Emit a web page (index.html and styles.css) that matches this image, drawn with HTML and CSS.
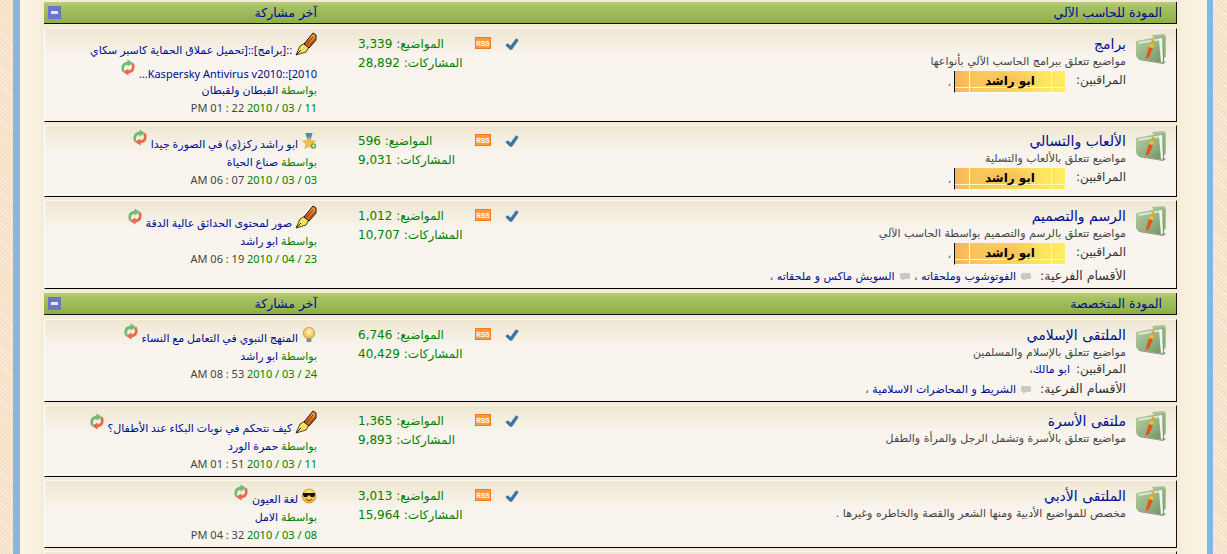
FILE: index.html
```html
<!DOCTYPE html>
<html lang="ar" dir="rtl">
<head>
    <meta charset="UTF-8">
    <title>المودة للحاسب الآلي</title>
    <link rel="stylesheet" href="styles.css">
</head>
<body>
    <svg class="sprites" width="0" height="0" aria-hidden="true">
        <defs>
            <linearGradient id="folderFill" x1="0" y1="0" x2="1" y2="1">
                <stop offset="0" stop-color="#b9d0a6"/>
                <stop offset="0.6" stop-color="#8cae7c"/>
                <stop offset="1" stop-color="#6b8f62"/>
            </linearGradient>
            <linearGradient id="penBody" x1="0" y1="1" x2="1" y2="0">
                <stop offset="0" stop-color="#c84a10"/>
                <stop offset="1" stop-color="#ffa030"/>
            </linearGradient>
            <radialGradient id="bulbFill" cx="0.5" cy="0.4" r="0.6">
                <stop offset="0" stop-color="#fff8c0"/>
                <stop offset="1" stop-color="#f0b030"/>
            </radialGradient>
            <radialGradient id="smileFill" cx="0.5" cy="0.35" r="0.7">
                <stop offset="0" stop-color="#fff090"/>
                <stop offset="1" stop-color="#eea020"/>
            </radialGradient>
            <symbol id="i-folder" viewBox="0 0 32 32">
                <path d="M17 3l12-1 2 2v21l-2 1z" fill="#a9c298"/>
                <path d="M1 9l27-5 2 2-1 23-2 2L3 27 1 24z" fill="url(#folderFill)"/>
                <path d="M3 10l24-4v2L4 12z" fill="#dbe8cf"/>
                <path d="M24 7l3-1 1 23-2 2z" fill="#f3f7ee"/>
                <path d="M4 27l23 4 2-2 2 1-3 2-24-4z" fill="#8a8f88"/>
                <path d="M11 25l3-10 4 1-4 9-3 2z" fill="#e8501c"/>
                <path d="M14 15l1-3 4 1-1 3z" fill="#f2c020"/>
                <circle cx="18" cy="9" r="1.600" fill="#f2a020"/>
            </symbol>
            <symbol id="i-check" viewBox="0 0 14 12">
                <path d="M0 7l3-2 2.500 2.500L11 0l3 2-7 10H5z" fill="#3f729f" stroke="#e4ecf2" stroke-width="0.5"/>
            </symbol>
            <symbol id="i-rss" viewBox="0 0 16 12">
                <rect x="0.5" y="0.5" width="15" height="11" fill="#fb9a3c" stroke="#f47a1c"/>
                <text x="8" y="8.6" font-family="Liberation Sans, sans-serif" font-size="6.5" font-weight="bold" text-anchor="middle" fill="#fff">RSS</text>
            </symbol>
            <symbol id="i-pen" viewBox="0 0 22 24">
                <path d="M1 23l4-9 5-3 4 4-3 5z" fill="#f5e060" stroke="#33330f" stroke-width="0.9"/>
                <path d="M1 23l5-5" stroke="#222" stroke-width="1"/>
                <path d="M9 12L18 1l3 2v5l-7 8z" fill="url(#penBody)" stroke="#111" stroke-width="1"/>
                <path d="M12 12l6-7M15 13l5-6" stroke="#5a2408" stroke-width="0.8"/>
            </symbol>
            <symbol id="i-arrows" viewBox="0 0 16 17">
                <path d="M3.500 12.500C1.500 8.500 3 4.500 8 4" fill="none" stroke="#6cbc74" stroke-width="2.800"/>
                <path d="M7.500 .5l5.500 3.500-5.500 3.500z" fill="#6cbc74"/>
                <path d="M12.500 4.500C14.500 8.500 13 12.500 8 13" fill="none" stroke="#e8694c" stroke-width="2.800"/>
                <path d="M8.500 9.500L3 13l5.500 3.500z" fill="#e8694c"/>
            </symbol>
            <symbol id="i-medal" viewBox="0 0 16 18">
                <path d="M4 0h8l-2 7H6z" fill="#4f86c6"/>
                <path d="M8 4l2.200 4.500 5 .6-3.600 3.400 1 5L8 15l-4.600 2.500 1-5L.8 9.100l5-.6z" fill="#f2c040" stroke="#d89a20" stroke-width="0.5"/>
                <circle cx="13" cy="14.500" r="3" fill="#62a848"/>
                <path d="M11.500 14.500h3M13 13v3" stroke="#fff" stroke-width="1"/>
            </symbol>
            <symbol id="i-bulb" viewBox="0 0 16 17">
                <circle cx="8" cy="6.500" r="6" fill="url(#bulbFill)" stroke="#a89060" stroke-width="0.8"/>
                <rect x="5.500" y="12" width="5" height="4" fill="#8c8c84"/>
            </symbol>
            <symbol id="i-smile" viewBox="0 0 16 16">
                <circle cx="8" cy="8" r="7" fill="url(#smileFill)" stroke="#c89030" stroke-width="0.7"/>
                <path d="M2 5h12v2l-1 2H10L8 7 6 9H3L2 7z" fill="#111"/>
                <path d="M5 11c2 2 4 2 6 0" stroke="#804010" fill="none"/>
            </symbol>
            <symbol id="i-bubble" viewBox="0 0 12 10">
                <path d="M2 1h8l1 1v4l-1 1H6L3 9V7H2L1 6V2z" fill="#c8c8c8"/>
            </symbol>
        </defs>
    </svg>

    <div class="page">
        <div class="section">
            <div class="cat-head">
                <a class="cat-title" href="#">المودة للحاسب الآلي</a>
                <span class="cat-last">آخر مشاركة</span>
                <span class="collapse"></span>
            </div>

            <div class="row row-a">
                <div class="forum">
                    <svg class="folder"><use href="#i-folder"/></svg>
                    <div class="info">
                        <a class="title" href="#">برامج</a>
                        <p class="desc">مواضيع تتعلق ببرامج الحاسب الآلي بأنواعها</p>
                        <p class="mods"><span class="label">المراقبين:</span><span class="banner">ابو راشد</span><span class="comma">،</span></p>
                    </div>
                </div>
                <svg class="check"><use href="#i-check"/></svg>
                <svg class="rss"><use href="#i-rss"/></svg>
                <div class="stats">
                    <div>المواضيع: 3,339</div>
                    <div>المشاركات: 28,892</div>
                </div>
                <div class="last">
                    <div class="post post-tall"><svg class="ico ico-pen"><use href="#i-pen"/></svg> <a href="#">::[برامج]::[تحميل عملاق الحماية كاسبر سكاي<br>2010]::Kaspersky Antivirus v2010...</a> <svg class="arrows"><use href="#i-arrows"/></svg></div>
                    <div class="by">بواسطة <a href="#">القبطان ولقبطان</a></div>
                    <div class="date" dir="ltr"><span class="time">PM 01 : 22</span> 2010 / 03 / 11</div>
                </div>
            </div>

            <div class="row row-b">
                <div class="forum">
                    <svg class="folder"><use href="#i-folder"/></svg>
                    <div class="info">
                        <a class="title" href="#">الألعاب والتسالي</a>
                        <p class="desc">مواضيع تتعلق بالألعاب والتسلية</p>
                        <p class="mods"><span class="label">المراقبين:</span><span class="banner">ابو راشد</span><span class="comma">،</span></p>
                    </div>
                </div>
                <svg class="check"><use href="#i-check"/></svg>
                <svg class="rss"><use href="#i-rss"/></svg>
                <div class="stats">
                    <div>المواضيع: 596</div>
                    <div>المشاركات: 9,031</div>
                </div>
                <div class="last">
                    <div class="post"><svg class="ico"><use href="#i-medal"/></svg> <a href="#">ابو راشد ركز(ي) في الصورة جيدا</a> <svg class="arrows"><use href="#i-arrows"/></svg></div>
                    <div class="by">بواسطة <a href="#">صناع الحياة</a></div>
                    <div class="date" dir="ltr"><span class="time">AM 06 : 07</span> 2010 / 03 / 03</div>
                </div>
            </div>

            <div class="row row-c">
                <div class="forum">
                    <svg class="folder"><use href="#i-folder"/></svg>
                    <div class="info">
                        <a class="title" href="#">الرسم والتصميم</a>
                        <p class="desc">مواضيع تتعلق بالرسم والتصميم بواسطة الحاسب الآلي</p>
                        <p class="mods"><span class="label">المراقبين:</span><span class="banner">ابو راشد</span><span class="comma">،</span></p>
                        <p class="subs"><span class="label">الأقسام الفرعية:</span><svg class="bubble"><use href="#i-bubble"/></svg><a href="#">الفوتوشوب وملحقاته</a> ، <svg class="bubble"><use href="#i-bubble"/></svg><a href="#">السويش ماكس و ملحقاته</a> ،</p>
                    </div>
                </div>
                <svg class="check"><use href="#i-check"/></svg>
                <svg class="rss"><use href="#i-rss"/></svg>
                <div class="stats">
                    <div>المواضيع: 1,012</div>
                    <div>المشاركات: 10,707</div>
                </div>
                <div class="last">
                    <div class="post"><svg class="ico ico-pen"><use href="#i-pen"/></svg> <a href="#">صور لمحتوى الحدائق عالية الدقة</a> <svg class="arrows"><use href="#i-arrows"/></svg></div>
                    <div class="by">بواسطة <a href="#">ابو راشد</a></div>
                    <div class="date" dir="ltr"><span class="time">AM 06 : 19</span> 2010 / 04 / 23</div>
                </div>
            </div>
        </div>

        <div class="section">
            <div class="cat-head">
                <a class="cat-title" href="#">المودة المتخصصة</a>
                <span class="cat-last">آخر مشاركة</span>
                <span class="collapse"></span>
            </div>

            <div class="row row-d">
                <div class="forum">
                    <svg class="folder"><use href="#i-folder"/></svg>
                    <div class="info">
                        <a class="title" href="#">الملتقى الإسلامي</a>
                        <p class="desc">مواضيع تتعلق بالإسلام والمسلمين</p>
                        <p class="mods mods-plain"><span class="label">المراقبين:</span><a href="#">ابو مالك</a> ،</p>
                        <p class="subs"><span class="label">الأقسام الفرعية:</span><svg class="bubble"><use href="#i-bubble"/></svg><a href="#">الشريط و المحاضرات الاسلامية</a> ،</p>
                    </div>
                </div>
                <svg class="check"><use href="#i-check"/></svg>
                <svg class="rss"><use href="#i-rss"/></svg>
                <div class="stats">
                    <div>المواضيع: 6,746</div>
                    <div>المشاركات: 40,429</div>
                </div>
                <div class="last">
                    <div class="post"><svg class="ico"><use href="#i-bulb"/></svg> <a href="#">المنهج النبوي في التعامل مع النساء</a> <svg class="arrows"><use href="#i-arrows"/></svg></div>
                    <div class="by">بواسطة <a href="#">ابو راشد</a></div>
                    <div class="date" dir="ltr"><span class="time">AM 08 : 53</span> 2010 / 03 / 24</div>
                </div>
            </div>

            <div class="row row-b">
                <div class="forum">
                    <svg class="folder"><use href="#i-folder"/></svg>
                    <div class="info">
                        <a class="title" href="#">ملتقى الأسرة</a>
                        <p class="desc">مواضيع تتعلق بالأسرة وتشمل الرجل والمرأة والطفل</p>
                    </div>
                </div>
                <svg class="check"><use href="#i-check"/></svg>
                <svg class="rss"><use href="#i-rss"/></svg>
                <div class="stats">
                    <div>المواضيع: 1,365</div>
                    <div>المشاركات: 9,893</div>
                </div>
                <div class="last">
                    <div class="post"><svg class="ico ico-pen"><use href="#i-pen"/></svg> <a href="#">كيف نتحكم في نوبات البكاء عند الأطفال؟</a> <svg class="arrows"><use href="#i-arrows"/></svg></div>
                    <div class="by">بواسطة <a href="#">حمرة الورد</a></div>
                    <div class="date" dir="ltr"><span class="time">AM 01 : 51</span> 2010 / 03 / 11</div>
                </div>
            </div>

            <div class="row row-e">
                <div class="forum">
                    <svg class="folder"><use href="#i-folder"/></svg>
                    <div class="info">
                        <a class="title" href="#">الملتقى الأدبي</a>
                        <p class="desc">مخصص للمواضيع الأدبية ومنها الشعر والقصة والخاطره وغيرها .</p>
                    </div>
                </div>
                <svg class="check"><use href="#i-check"/></svg>
                <svg class="rss"><use href="#i-rss"/></svg>
                <div class="stats">
                    <div>المواضيع: 3,013</div>
                    <div>المشاركات: 15,964</div>
                </div>
                <div class="last">
                    <div class="post"><svg class="ico"><use href="#i-smile"/></svg> <a href="#">لغة العيون</a> <svg class="arrows"><use href="#i-arrows"/></svg></div>
                    <div class="by">بواسطة <a href="#">الامل</a></div>
                    <div class="date" dir="ltr"><span class="time">PM 04 : 32</span> 2010 / 03 / 08</div>
                </div>
            </div>

            <div class="row row-stub"></div>
        </div>
    </div>
</body>
</html>
```

FILE: styles.css
```css
html, body {
    height: 554px;
    overflow: hidden;
}
body {
    margin: 0;
    font-family: "DejaVu Sans", sans-serif;
    font-size: 11px;
    color: #444;
    background-color: #f6e6cf;
    background-image: repeating-linear-gradient(45deg, #f9eeda 0 1px, #f3e0c6 1px 3px);
}
a {
    color: #000a96;
    text-decoration: none;
}
p {
    margin: 0;
}
.sprites {
    position: absolute;
}
.page {
    box-sizing: border-box;
    height: 554px;
    margin: 0 14px 0 13px;
    padding: 2px 30px 0 24px;
    border-left: 7px solid #85b6e6;
    border-right: 6px solid #85b6e6;
    background: linear-gradient(90deg, #fdf5e4 0, #f5ecd8 24px, #f5ecd8 calc(100% - 30px), #fdf5e4 100%);
}
.section {
    display: flex;
    flex-direction: column;
    gap: 3px;
    margin-bottom: 4px;
}
.section:last-child {
    margin-bottom: 0;
}
.cat-head {
    display: flex;
    align-items: center;
    box-sizing: border-box;
    height: 22px;
    margin-bottom: 1px;
    padding: 0 14px 0 4px;
    border-bottom: 1px solid #111;
    border-right: 1px solid #111;
    background: linear-gradient(#b9d07e 0, #b0ca70 2px, #a6c264 5px, #8fae45 100%);
}
.cat-title {
    flex: 1;
    font-size: 12.5px;
}
.cat-last {
    width: 256px;
    color: #000a96;
    font-size: 12.5px;
}
.collapse {
    position: relative;
    width: 13px;
    height: 13px;
    background: #6a74c8;
}
.collapse::after {
    content: "";
    position: absolute;
    left: 3px;
    right: 3px;
    top: 5px;
    height: 3px;
    background: #e8e8f8;
}
.row {
    display: flex;
    box-sizing: border-box;
    border-top: 1px solid #fbf8f0;
    border-left: 1px solid #fff;
    border-bottom: 1px solid #000;
    border-right: 1px solid #111;
    background: #f9f5ee linear-gradient(#efe7d2 0, #f9f5ee 28px) no-repeat;
}
.row-a { height: 94px; }
.row-b { height: 72px; }
.row-c { height: 89px; }
.row-d { height: 83px; }
.row-e { height: 68px; }
.row-stub {
    height: 3px;
    border-bottom: 0;
}

.forum {
    display: flex;
    width: 650px;
    flex-shrink: 0;
}
.folder {
    width: 32px;
    height: 32px;
    margin: 3px 9px 0 9px;
    flex-shrink: 0;
}
.info {
    padding-top: 6px;
}
.title {
    display: block;
    font-size: 14px;
    line-height: 18px;
}
.desc {
    line-height: 18px;
}
.label {
    margin-left: 11px;
    color: #333;
    font-size: 12px;
    line-height: 18px;
}
.mods {
    display: flex;
    height: 22px;
}
.mods-plain {
    height: 16px;
    line-height: 15px;
}
.mods-plain .label {
    margin-left: 6px;
    line-height: 15px;
}
.banner {
    box-sizing: border-box;
    width: 111px;
    height: 22px;
    border-left: 1px solid #111;
    border-bottom: 1px solid #fff;
    color: #000;
    font-size: 12px;
    font-weight: bold;
    line-height: 20px;
    text-align: center;
    background-image:
        linear-gradient(90deg, transparent 14px, #fff6c0 14px 15px, transparent 15px 96px, #fff6c0 96px 97px, transparent 97px),
        linear-gradient(transparent 16px, #fff6c0 16px 17px, transparent 17px),
        radial-gradient(ellipse 40px 14px at 45% 45%, #f6bc5c, transparent),
        linear-gradient(90deg, #f6b45c 0, #fdd25a 30%, #ffec60 100%);
}
.comma {
    margin: 6px 3px 0 0;
    font-size: 10px;
}
.subs {
    margin-top: 2px;
    line-height: 18px;
    font-size: 11px;
}
.subs .label {
    margin-left: 8px;
    font-size: 12.5px;
}
.bubble {
    width: 12px;
    height: 10px;
    margin: 0 0 0 4px;
    vertical-align: middle;
}
.check {
    width: 14px;
    height: 12px;
    margin: 9px 7px 0 7px;
    flex-shrink: 0;
}
.rss {
    width: 16px;
    height: 12px;
    margin: 8px 7px 0 7px;
    flex-shrink: 0;
}
.stats {
    width: 110px;
    flex-shrink: 0;
    padding-top: 6px;
    color: #008000;
    font-size: 12px;
    line-height: 19px;
    text-align: left;
}
.last {
    flex: 1;
    padding: 9px 41px 0 0;
    line-height: 18px;
    font-family: "Noto Sans", "DejaVu Sans", sans-serif;
}
.post-tall {
    margin: -1px 0 -5px;
    line-height: 24px;
}
.ico {
    width: 16px;
    height: 16px;
    margin-top: -2px;
    vertical-align: -1px;
}
.ico-pen {
    width: 22px;
    height: 24px;
    margin-top: -5px;
    vertical-align: -2px;
}
.arrows {
    width: 16px;
    height: 17px;
    margin-top: -6px;
    vertical-align: 2px;
}
.by {
    color: #008000;
}
.date {
    color: #008000;
    font-size: 11px;
    text-align: right;
}
.time {
    color: #444;
}
```
